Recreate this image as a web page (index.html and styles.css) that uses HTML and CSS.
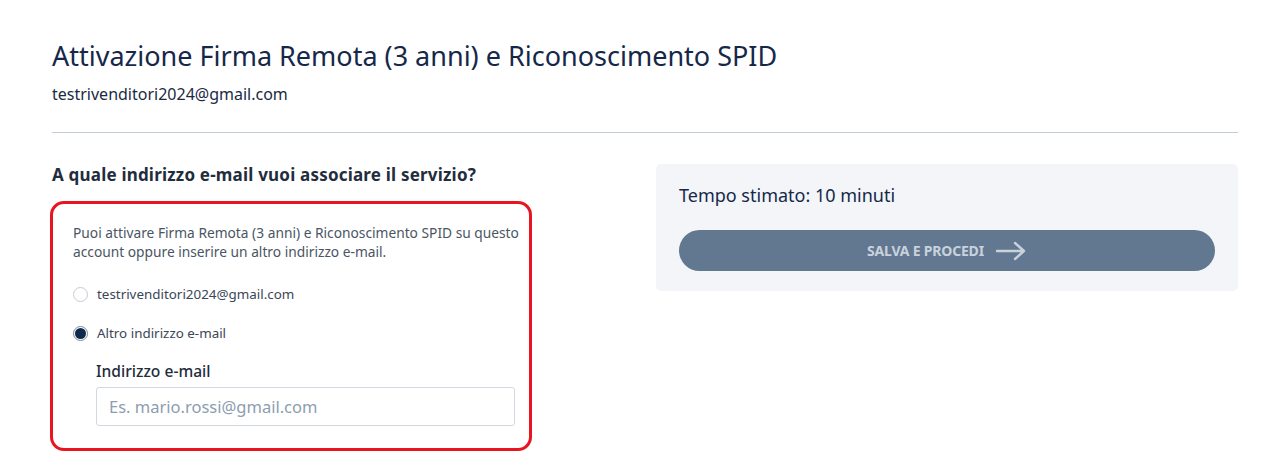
FILE: index.html
```html
<!DOCTYPE html>
<html lang="it">
<head>
<meta charset="utf-8">
<title>Attivazione Firma Remota</title>
<link rel="stylesheet" href="styles.css">
</head>
<body>
<main class="page">
  <header class="header">
    <h1 class="title">Attivazione Firma Remota (3 anni) e Riconoscimento SPID</h1>
    <p class="account">testrivenditori2024@gmail.com</p>
  </header>
  <div class="content">
    <section class="left">
      <h2 class="question">A quale indirizzo e-mail vuoi associare il servizio?</h2>
      <div class="card">
        <p class="desc">Puoi attivare Firma Remota (3 anni) e Riconoscimento SPID su questo account oppure inserire un altro indirizzo e-mail.</p>
        <label class="radio-row">
          <span class="radio"></span>
          <span class="radio-text">testrivenditori2024@gmail.com</span>
        </label>
        <label class="radio-row">
          <span class="radio checked"></span>
          <span class="radio-text">Altro indirizzo e-mail</span>
        </label>
        <div class="field">
          <span class="field-label">Indirizzo e-mail</span>
          <input class="input" type="text" placeholder="Es. mario.rossi@gmail.com">
        </div>
      </div>
    </section>
    <aside class="right">
      <div class="panel">
        <p class="time">Tempo stimato: 10 minuti</p>
        <button class="btn" type="button">
          <span>SALVA E PROCEDI</span>
          <svg class="arrow" width="32" height="20" viewBox="0 0 32 20" fill="none" stroke="currentColor" stroke-width="2.4" stroke-linecap="round" stroke-linejoin="round"><path d="M2 10H29M20 2l9 8-9 8"/></svg>
        </button>
      </div>
    </aside>
  </div>
</main>
</body>
</html>
```
FILE: styles.css
```css
* { box-sizing: border-box; }
html, body { margin: 0; padding: 0; background: #fff; }
body {
  font-family: "Noto Sans", "Open Sans", sans-serif;
  color: #1b2a44;
}
.page {
  padding: 37px 42px 0 52px;
}
.header {
  border-bottom: 1px solid #c1cdd8;
  padding-bottom: 28px;
}
.title {
  margin: 0;
  font-size: 27px;
  font-weight: 400;
  line-height: 38px;
  color: #15284a;
}
.account {
  margin: 9px 0 0;
  font-size: 16px;
  line-height: 20px;
  color: #1b2a44;
}
.content {
  display: flex;
  gap: 124px;
  padding-top: 31px;
}
.left {
  width: 480px;
  flex: none;
}
.question {
  margin: 0 0 15px;
  font-size: 17px;
  font-weight: 700;
  line-height: 22px;
  letter-spacing: 0.2px;
  color: #1f2d3d;
}
.card {
  margin-left: -2px;
  width: 482px;
  border: 3px solid #e8141f;
  border-radius: 14px;
  padding: 19px 10px 22px 20px;
}
.desc {
  margin: 0 0 23px;
  font-size: 13.75px;
  line-height: 19px;
  color: #4a5563;
}
.radio-row {
  display: flex;
  align-items: center;
  gap: 9px;
  height: 20px;
  margin-bottom: 19px;
}
.radio-row + .radio-row {
  margin-bottom: 17px;
}
.radio {
  width: 15px;
  height: 15px;
  border-radius: 50%;
  border: 1px solid #c5ccd5;
  background: #fff;
  flex: none;
  display: flex;
  align-items: center;
  justify-content: center;
}
.radio.checked {
  border-color: #7d8896;
}
.radio.checked::after {
  content: "";
  width: 11px;
  height: 11px;
  border-radius: 50%;
  background: #0f2a4f;
}
.radio-text {
  font-size: 13.4px;
  color: #3b4656;
}
.field {
  margin-left: 23px;
  display: flex;
  flex-direction: column;
}
.field-label {
  font-size: 15.6px;
  font-weight: 500;
  line-height: 22px;
  color: #1f2d3d;
  margin-bottom: 5px;
}
.input {
  width: 419px;
  height: 39px;
  border: 1px solid #d2d8df;
  border-radius: 3px;
  padding: 0 12px;
  font-family: "Noto Sans", "Open Sans", sans-serif;
  font-size: 16.5px;
  color: #1f2d3d;
  outline: none;
}
.input::placeholder { color: #8d9db0; }
.right {
  flex: 1;
}
.panel {
  background: #f3f5f9;
  border-radius: 5px;
  padding: 19px 23px 20px;
}
.time {
  margin: 0 0 23px;
  font-size: 18px;
  line-height: 24px;
  color: #15284a;
}
.btn {
  width: 100%;
  height: 41px;
  border: none;
  border-radius: 21px;
  background: #627891;
  color: #c9d2dc;
  font-family: "Noto Sans", "Open Sans", sans-serif;
  font-weight: 700;
  font-size: 14px;
  letter-spacing: -0.2px;
  display: flex;
  align-items: center;
  justify-content: center;
  gap: 11px;
  padding: 0;
}
.arrow { display: block; }
```
